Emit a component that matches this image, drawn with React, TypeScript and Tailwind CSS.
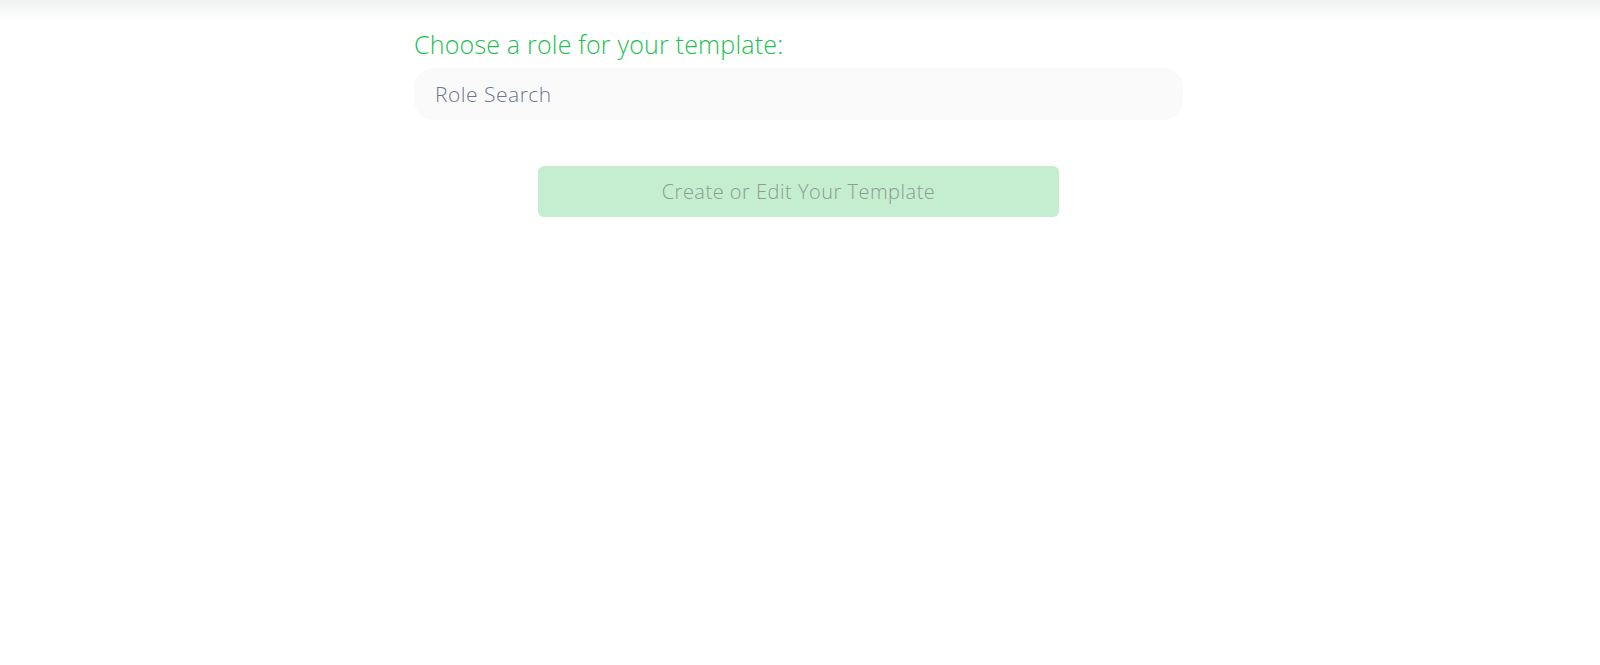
import React from "react";

export default function App() {
  return (
    <div className="min-h-[665px] w-full bg-white" style={{ fontFamily: "'Open Sans', Lato, sans-serif" }}>
      <div className="h-[22px] w-full bg-gradient-to-b from-[#f1f3f3] to-white" />
      <div className="flex justify-center pr-[3px]">
        <div className="flex w-[769px] flex-col">
          <label className="mt-[6px] h-[32px] text-[25px] font-light leading-[32px] tracking-[0.2px] text-[#21c04f]">
            Choose a role for your template:
          </label>
          <input
            type="text"
            placeholder="Role Search"
            className="mt-[8px] h-[52px] w-full rounded-[20px] bg-[#fafafa] px-[21px] text-[21px] font-light tracking-[0.5px] text-[#6e7591] outline-none placeholder:text-[#6e7591]"
          />
          <div className="mt-[46px] flex justify-center">
            <button
              disabled
              className="h-[51px] w-[521px] rounded-[6px] bg-[#c4eecf] text-[20px] font-light tracking-[0.5px] text-[#8e9a92]"
            >
              Create or Edit Your Template
            </button>
          </div>
        </div>
      </div>
    </div>
  );
}
